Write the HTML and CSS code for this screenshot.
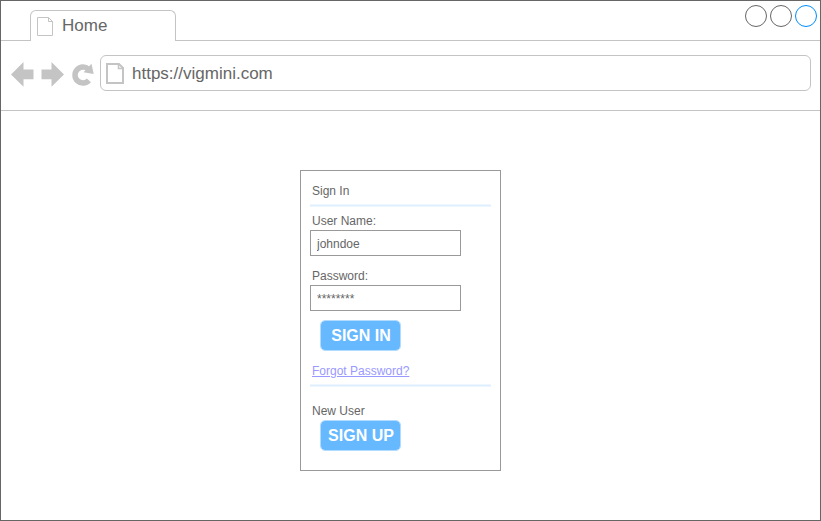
FILE: index.html
```html
<!DOCTYPE html>
<html lang="en">
<head>
<meta charset="utf-8">
<title>Sign In</title>
<link rel="stylesheet" href="styles.css">
</head>
<body>
<div class="browser">
  <header class="tabs">
    <div class="tabs-lead"></div>
    <div class="tab">
      <svg class="tab-icon" width="16" height="19" viewBox="0 0 16 19"><path d="M.5.5H11.5L15.5 4.5V18.5H.5ZM11.5.5V4.5H15.5"/></svg>
      <span>Home</span>
    </div>
    <div class="window-controls">
      <i class="control"></i><i class="control"></i><i class="control control-active"></i>
    </div>
  </header>
  <nav class="toolbar">
    <svg class="nav-icons" width="84" height="26" viewBox="0 0 84 26">
      <path d="M0 13.500 12.500 1V8.500H22.500V18.200H12.500V25.800Z"/>
      <path d="M53 13.500 40.500 1V8.500H30.500V18.200H40.500V25.800Z"/>
      <path class="reload" d="M77.500 8.200A8 8 0 1 0 77.900 19.400"/>
      <path d="M80.500 2.800 82.700 12.900 72.500 11.300Z"/>
    </svg>
    <div class="address">
      <svg class="page-icon" width="18" height="21" viewBox="0 0 18 21"><path d="M1 1H13L17 5V20H1Z"/><path class="fold" d="M12.500 1V5.500H17"/></svg>
      <span class="url">https://vigmini.com</span>
    </div>
  </nav>
  <main class="page">
    <form class="panel">
      <h1 class="title">Sign In</h1>
      <div class="rule"></div>
      <label class="label" for="user">User Name:</label>
      <input class="field" id="user" type="text" value="johndoe">
      <label class="label label-password" for="pass">Password:</label>
      <input class="field" id="pass" type="text" value="********">
      <button class="button" type="button">SIGN IN</button>
      <a class="forgot" href="#">Forgot Password?</a>
      <div class="rule"></div>
      <p class="new-user">New User</p>
      <button class="button button-signup" type="button">SIGN UP</button>
    </form>
  </main>
</div>
</body>
</html>
```

FILE: styles.css
```css
* { box-sizing: border-box; }

body {
  margin: 0;
  background: #fff;
  color: #666;
  font-family: "Liberation Sans", Arial, sans-serif;
}

.browser {
  display: flex;
  flex-direction: column;
  width: 821px;
  height: 521px;
  border: 1px solid #666;
}

.tabs {
  display: flex;
  align-items: flex-end;
  height: 40px;
}

.tabs-lead {
  width: 29px;
  border-bottom: 1px solid #c4c4c4;
}

.tab {
  display: flex;
  align-items: center;
  gap: 9px;
  width: 146px;
  height: 31px;
  padding: 0 0 0 6px;
  border: 1px solid #c4c4c4;
  border-bottom: 0;
  border-radius: 6px 6px 0 0;
  font-size: 17px;
  line-height: 20px;
}

.tab-icon {
  margin-top: 1px;
  fill: none;
  stroke: #c4c4c4;
}

.window-controls {
  display: flex;
  flex: 1;
  justify-content: flex-end;
  gap: 3px;
  height: 40px;
  padding: 4px 3px 0 0;
  border-bottom: 1px solid #c4c4c4;
}

.control {
  width: 22px;
  height: 22px;
  border: 1px solid #666;
  border-radius: 50%;
}

.control-active { border-color: #008cff; }

.toolbar {
  display: flex;
  align-items: flex-start;
  height: 70px;
  padding: 14px 9px 0 10px;
  border-bottom: 1px solid #c4c4c4;
}

.nav-icons {
  flex: none;
  margin: 6px 5px 0 0;
  fill: #c4c4c4;
}

.reload {
  fill: none;
  stroke: #c4c4c4;
  stroke-width: 5.5;
}

.address {
  display: flex;
  flex: 1;
  align-items: center;
  gap: 8px;
  height: 36px;
  padding-left: 5px;
  border: 1px solid #c4c4c4;
  border-radius: 6px;
  font-size: 17px;
}

.page-icon {
  fill: none;
  stroke: #c4c4c4;
  stroke-width: 2;
}

.fold { stroke-width: 1.5; }

.url { padding-top: 2px; }

.page {
  flex: 1;
  padding: 59px 0 0 299px;
}

.panel {
  display: flex;
  flex-direction: column;
  align-items: flex-start;
  width: 201px;
  height: 301px;
  padding: 12px 9px 0;
  border: 1px solid #999;
  font-size: 12px;
  line-height: 16px;
}

.title, .new-user, .label, .forgot { margin: 0 0 0 2px; }

.title {
  height: 21px;
  font-size: 12px;
  font-weight: 400;
}

.rule {
  flex: none;
  width: 181px;
  height: 3px;
  border: solid #eef6ff;
  border-width: 1px 0;
  background: #ddeeff;
}

.label {
  height: 17px;
  margin-top: 6px;
}

.label-password { margin-top: 12px; }

.field {
  width: 151px;
  height: 26px;
  padding: 2px 6px 0;
  border: 1px solid #999;
  border-radius: 0;
  background: #fff;
  color: #666;
  font: inherit;
}

.button {
  width: 81px;
  height: 31px;
  flex: none;
  margin: 9px 0 0 10px;
  padding: 0 0 0 1px;
  border: 1px solid #b2dcff;
  border-radius: 5px;
  background: #66b9ff;
  background-clip: padding-box;
  color: #fff;
  font: bold 16px/29px "Liberation Sans", Arial, sans-serif;
}

.forgot {
  height: 21px;
  margin-top: 12px;
  color: #9999ff;
}

.new-user { margin-top: 16px; }

.button-signup { margin-top: 1px; }
```
